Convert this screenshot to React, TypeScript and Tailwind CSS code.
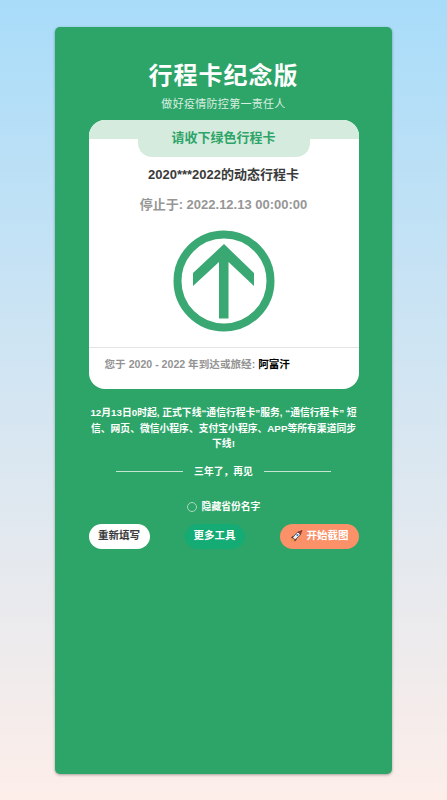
export default function App() {
  return (
    <div
      className="h-[800px] w-full overflow-hidden bg-gradient-to-b from-[#a8dcf9] to-[#fdeee9] pt-[27px] px-[55px]"
      style={{ fontFamily: '"Liberation Sans", "Noto Sans CJK SC", sans-serif' }}
    >
      <div className="h-[747px] w-[337px] rounded-[5px] bg-[#2da568] shadow-[0_1px_3px_rgba(0,0,0,0.35)] pt-[34px] flex flex-col items-center">
        <h1 className="text-[24px] leading-[30px] font-bold tracking-[1px] text-white">行程卡纪念版</h1>
        <p className="mt-[5px] text-[11px] leading-[16px] tracking-[0.3px] text-[#d9efe2]">做好疫情防控第一责任人</p>
        <div className="mt-[8px] h-[269px] w-[270px] rounded-[16px] bg-white flex flex-col items-center overflow-hidden">
          <div className="h-[19px] w-full bg-[#d5ebde] shrink-0" />
          <div className="mt-[-19px] h-[37px] w-[172px] shrink-0 rounded-b-[14px] bg-[#d5ebde] text-center text-[13px] leading-[35px] font-bold text-[#2da568]">
            请收下绿色行程卡
          </div>
          <p className="mt-[8px] text-[13px] leading-[20px] font-bold text-[#3a3a3a]">2020***2022的动态行程卡</p>
          <p className="mt-[10px] text-[13px] leading-[20px] font-bold text-[#969696]">停止于: 2022.12.13 00:00:00</p>
          <svg className="mt-[15px] shrink-0" width="102" height="102" viewBox="0 0 102 102">
            <circle cx="51" cy="51" r="46.5" fill="none" stroke="#3aa873" strokeWidth="8" />
            <path d="M51 14 L81 43 L81 56 L55.5 32 L55.5 88.5 L46 88.5 L46 32 L20 56 L20 43 Z" fill="#3aa873" />
          </svg>
          <div className="mt-[15px] w-full flex-1 border-t border-[#e4e4e4] px-[16px] pt-[7px] text-[10.6px] leading-[18px] font-bold text-[#939393]">
            您于 2020 - 2022 年到达或旅经: <span className="text-black">阿富汗</span>
          </div>
        </div>
        <p className="mt-[16px] w-[270px] whitespace-nowrap text-center text-[9.8px] leading-[15.5px] font-bold text-white">
          12月13日0时起, 正式下线“通信行程卡”服务, “通信行程卡” 短<br />
          信、网页、微信小程序、支付宝小程序、APP等所有渠道同步<br />
          下线!
        </p>
        <div className="mt-[12px] flex items-center gap-[11px]">
          <div className="h-px w-[67px] bg-[#c5e6d3]" />
          <span className="text-[9.8px] leading-[16px] font-bold text-white">三年了，再见</span>
          <div className="h-px w-[67px] bg-[#c5e6d3]" />
        </div>
        <div className="mt-[19px] flex items-center gap-[5px]">
          <span className="h-[10px] w-[10px] rounded-full border border-[#a9d8bd]" />
          <span className="text-[9.8px] leading-[16px] font-bold text-white">隐藏省份名字</span>
        </div>
        <div className="mt-[9px] flex w-[270px] items-center justify-between">
          <button className="h-[25px] w-[61px] rounded-full bg-white text-[10.5px] font-bold text-[#3a3a3a]">重新填写</button>
          <button className="h-[25px] w-[60px] rounded-full bg-[#14ab74] text-[10.5px] font-bold text-white">更多工具</button>
          <button className="flex h-[25px] w-[79px] items-center justify-center gap-[4px] rounded-full bg-[#fb9168] text-[10.5px] font-bold text-white">
            <svg width="13" height="14" viewBox="0 0 14 14">
              <path d="M1 13 L2 9.5 L4.5 12 Z" fill="#e0a030" />
              <path d="M3.4 6.8 L1.4 8.8 L3.5 9.4 Z" fill="#c0392b" stroke="#222" strokeWidth="0.4" />
              <path d="M7.2 10.6 L5.2 12.6 L4.6 10.5 Z" fill="#c0392b" stroke="#222" strokeWidth="0.4" />
              <path d="M3 8.5 L8 3 L11 3 L11 6 L5.5 11 Z" fill="#eef3f6" stroke="#222" strokeWidth="0.7" />
              <path d="M8.6 2.8 L13 1 L11.2 5.4 Z" fill="#c0392b" stroke="#222" strokeWidth="0.5" />
              <circle cx="8" cy="6" r="1.2" fill="#3b82c4" />
            </svg>
            开始截图
          </button>
        </div>
      </div>
    </div>
  );
}
